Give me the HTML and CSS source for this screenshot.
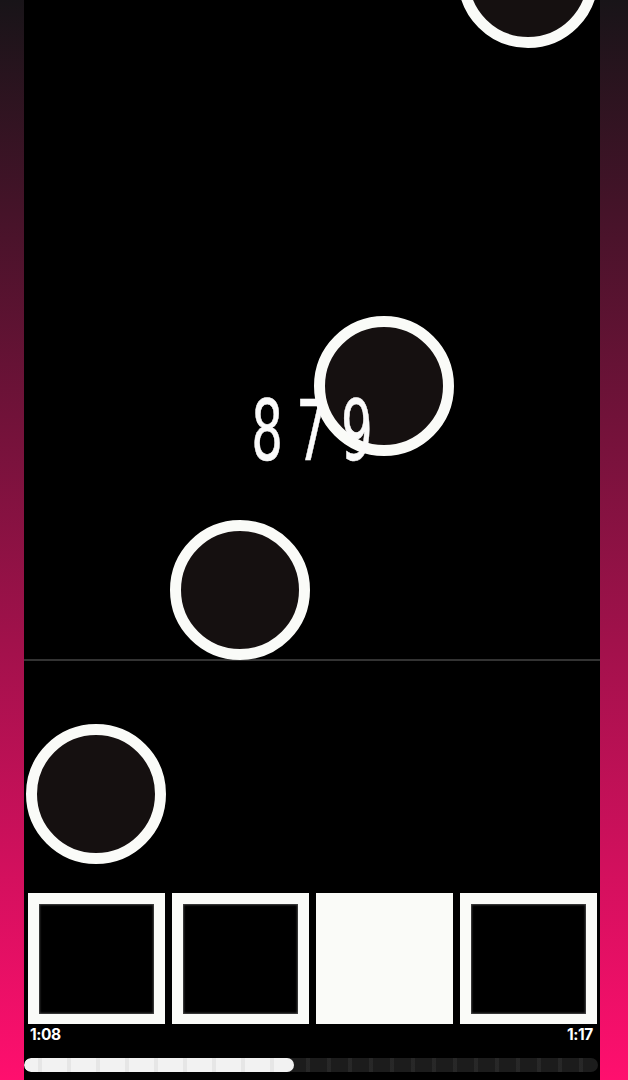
FILE: index.html
```html
<!DOCTYPE html>
<html lang="en">
<head>
<meta charset="utf-8">
<title>Tiles</title>
<link rel="stylesheet" href="styles.css">
</head>
<body>
<div class="frame">
  <div class="side side-left"></div>
  <main class="game">
    <section class="canvas">
      <div class="hit-line"></div>
      <div class="note" style="left:434px;top:-92px"></div>
      <div class="note" style="left:290px;top:316px"></div>
      <div class="note" style="left:146px;top:520px"></div>
      <div class="note" style="left:2px;top:724px"></div>
      <div class="score">879</div>
    </section>
    <section class="tiles">
      <div class="tile"></div>
      <div class="tile"></div>
      <div class="tile tile-on"></div>
      <div class="tile"></div>
    </section>
    <div class="times">
      <span>1:08</span>
      <span>1:17</span>
    </div>
    <div class="progress">
      <div class="progress-fill" style="width:47%"></div>
    </div>
  </main>
  <div class="side side-right"></div>
</div>
</body>
</html>
```
FILE: styles.css
```css
* { box-sizing: border-box; }
html, body { margin: 0; padding: 0; background: #000; }
body { font-family: Inter, "Noto Sans", sans-serif; color: #fff; }

.frame {
  display: flex;
  width: 628px;
  height: 1080px;
  overflow: hidden;
}

.side {
  background: linear-gradient(to bottom, #181418 0%, #ff0f6e 100%);
}
.side-left { width: 24px; }
.side-right { width: 28px; }

.game {
  width: 576px;
  height: 1080px;
  background: #000;
  display: flex;
  flex-direction: column;
}

.canvas {
  position: relative;
  height: 893px;
  flex: none;
}

.hit-line {
  position: absolute;
  left: 0;
  right: 0;
  top: 659px;
  height: 2px;
  background: #333333;
}

.note {
  position: absolute;
  width: 140px;
  height: 140px;
  border-radius: 50%;
  border: 11px solid #fafbf8;
  background: #151010;
}

.score {
  position: absolute;
  left: 0;
  right: 0;
  top: 381px;
  text-align: center;
  font-family: "DejaVu Sans Condensed", "DejaVu Sans", sans-serif;
  font-weight: 400;
  font-size: 84px;
  line-height: 100px;
  letter-spacing: 20px;
  padding-left: 20px;
  transform: scaleX(0.66);
  transform-origin: 50% 50%;
  color: #fafafa;
  -webkit-text-stroke: 0.6px #fafafa;
  z-index: 2;
}

.tiles {
  display: flex;
  gap: 7px;
  padding: 0 3px 0 4px;
  height: 131px;
}

.tile {
  width: 137px;
  height: 131px;
  border: 11px solid #fafbf8;
  border-bottom-width: 10px;
  background: #000;
  box-shadow: inset 0 0 2px 1px rgba(120,120,120,0.6);
}
.tile-on {
  background: #fafbf8;
  box-shadow: none;
}

.times {
  display: flex;
  justify-content: space-between;
  padding: 1px 7px 0 6px;
  height: 34px;
  font-weight: 700;
  font-size: 15.5px;
  line-height: 20px;
  letter-spacing: -0.4px;
}

.progress {
  height: 14px;
  width: 574px;
  border-radius: 7px;
  background:
    repeating-linear-gradient(to right, rgba(255,255,255,0) 0 9px, rgba(255,255,255,0.05) 9px 13px, rgba(255,255,255,0) 13px 21px),
    #1c1c1c;
  overflow: hidden;
}
.progress-fill {
  height: 100%;
  border-radius: 7px;
  background:
    repeating-linear-gradient(to right, rgba(0,0,0,0) 0 14px, rgba(0,0,0,0.05) 14px 18px, rgba(0,0,0,0) 18px 29px),
    #f2f2f2;
}
```
